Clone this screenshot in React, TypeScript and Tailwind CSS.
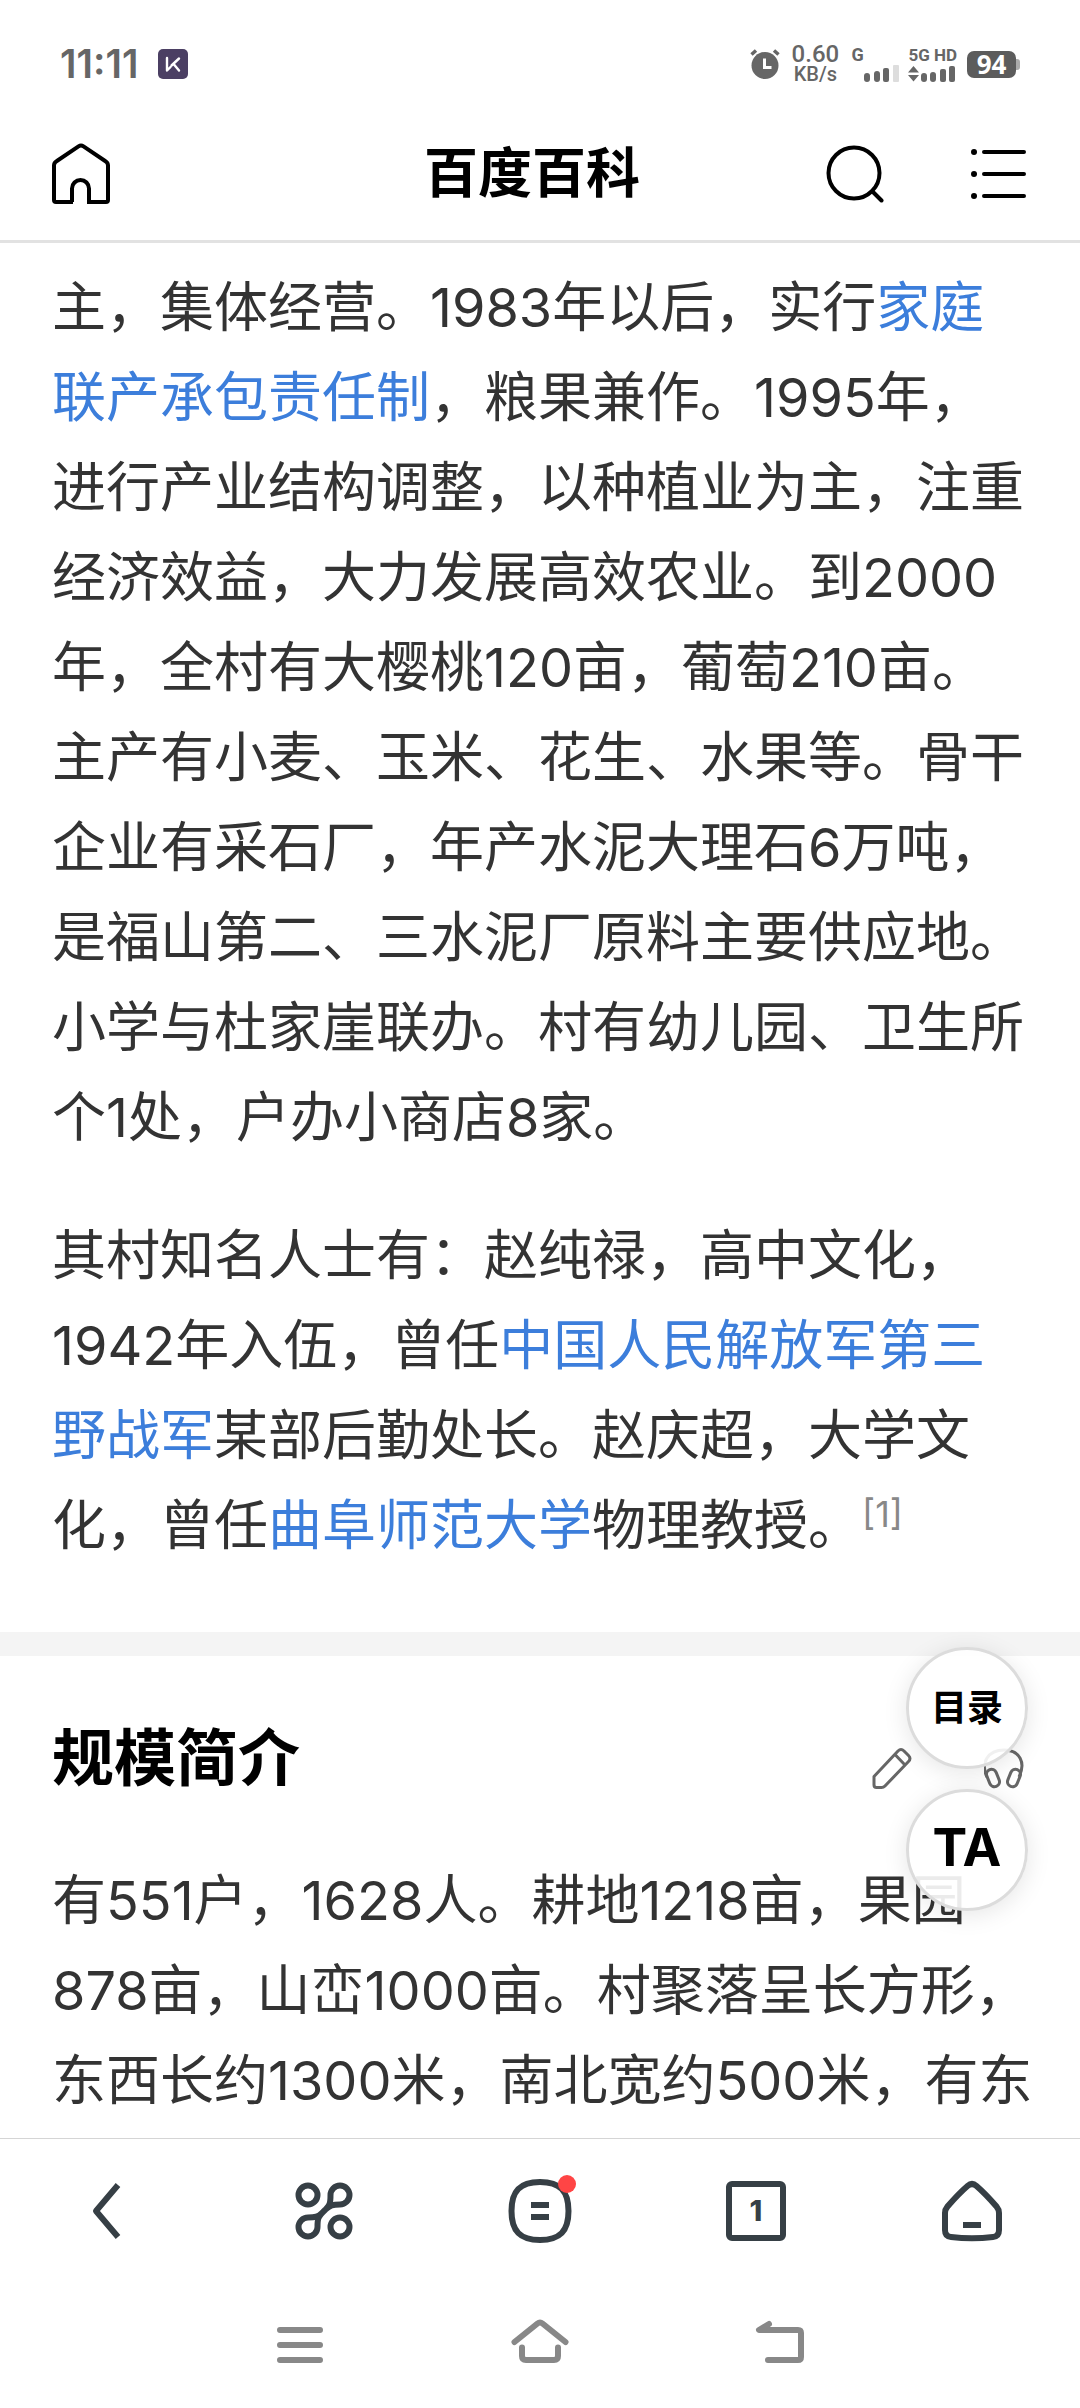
import React from 'react';

interface LineProps {
  children: React.ReactNode;
}

const Line: React.FC<LineProps> = ({ children }) => (
  <span className="block whitespace-nowrap">{children}</span>
);

const Term: React.FC<LineProps> = ({ children }) => (
  <a href="#" className="text-[#3c7edb]">{children}</a>
);

const StatusBar: React.FC = () => (
  <div className="flex h-[84px] items-end justify-between px-[60px] text-[#666]">
    <div className="flex h-[40px] items-center gap-[20px]">
      <span className="font-[Inter,sans-serif] text-[39px] leading-[40px] font-semibold">11:11</span>
      <svg width="30" height="30" viewBox="0 0 30 30" fill="none" aria-hidden="true">
        <rect width="30" height="30" rx="5" fill="#4b3f63" />
        <path d="M9 9v12.500l3.500-3.500M13.500 16.500 21 9.500M16 15.500l5 6" stroke="#fff" strokeWidth="2.400" strokeLinecap="round" strokeLinejoin="round" />
      </svg>
    </div>
    <div className="flex h-[40px] items-center font-[Roboto,sans-serif]">
      <svg width="30" height="30" viewBox="0 0 30 30" aria-hidden="true">
        <circle cx="15" cy="16.500" r="13.500" fill="#666" />
        <path d="M1.500 5.500 6 1.500M24 1.500l4.500 4" stroke="#666" strokeWidth="3.500" />
        <path d="M14.500 9.500v9h7" stroke="#fff" strokeWidth="3" fill="none" />
      </svg>
      <div className="ml-[10px] flex w-[50px] flex-col items-center">
        <span className="text-[24px] leading-[20px] font-medium">0.60</span>
        <span className="text-[20px] leading-[20px] font-medium">KB/s</span>
      </div>
      <div className="ml-[11px] flex h-[36px] flex-col items-start justify-between">
        <span className="text-[18px] leading-[18px] font-bold">G</span>
        <svg className="ml-[13px]" width="36" height="17" viewBox="0 0 36 17" fill="#666" aria-hidden="true">
          <rect x="0" y="8" width="6" height="9" rx="3" />
          <rect x="10" y="6" width="6" height="11" rx="3" />
          <rect x="19" y="3" width="6" height="14" rx="2" />
          <rect x="29" y="0" width="6" height="17" rx="1" fill="#ddd" />
        </svg>
      </div>
      <div className="ml-[8px] flex h-[36px] flex-col items-start justify-between">
        <span className="text-[17px] leading-[18px] font-bold">5G HD</span>
        <svg width="48" height="17" viewBox="0 0 48 17" fill="#666" aria-hidden="true">
          <path d="M5.500 1 11 7.500H0zM5.500 16.500 0 10h11z" />
          <rect x="13" y="8" width="6" height="9" rx="3" />
          <rect x="22" y="7" width="6" height="10" rx="3" />
          <rect x="32" y="4" width="6" height="13" rx="2" />
          <rect x="41" y="1" width="6" height="16" rx="2" />
        </svg>
      </div>
      <div className="ml-[10px] flex items-center">
        <span className="flex h-[27px] w-[49px] items-center justify-center rounded-[7px] bg-[#5c5c5c] font-['Open_Sans',sans-serif] text-[26px] leading-[27px] font-bold text-white">94</span>
        <span className="h-[11px] w-[4px] rounded-r-[3px] bg-[#aaa]" />
      </div>
    </div>
  </div>
);

const Header: React.FC = () => (
  <header className="border-b-[3px] border-[#e2e2e2] bg-white">
    <StatusBar />
    <div className="grid h-[156px] grid-cols-[1fr_auto_1fr] items-center pt-[24px] pr-[54px] pl-[52px]">
      <a href="#" aria-label="首页" className="h-[62px] w-[58px]">
        <svg width="58" height="62" viewBox="0 0 58 62" fill="none" stroke="#000" strokeWidth="4" aria-hidden="true">
          <path d="M21 59H4a2 2 0 0 1-2-2V22.500a5 5 0 0 1 2.500-4.300L26.500 3.300a4.500 4.500 0 0 1 5 0L53.500 18.200A5 5 0 0 1 56 22.500V57a2 2 0 0 1-2 2H37V45.500a8.500 8.500 0 0 0-17 0V59" />
        </svg>
      </a>
      <h1 className="-ml-[14px] text-[54px] leading-[64px] font-bold text-black">百度百科</h1>
      <div className="flex items-center justify-end gap-[86px]">
        <button type="button" aria-label="搜索">
          <svg width="58" height="58" viewBox="0 0 58 58" fill="none" stroke="#000" strokeWidth="4" strokeLinecap="round" aria-hidden="true">
            <circle cx="28" cy="28" r="25.500" />
            <path d="m46.500 46.500 9 9" />
          </svg>
        </button>
        <button type="button" aria-label="菜单">
          <svg width="56" height="52" viewBox="0 0 56 52" fill="none" stroke="#000" strokeWidth="4" strokeLinecap="round" aria-hidden="true">
            <path d="M14 4h40M14 26h40M14 48h40" />
            <path d="M4 4h.01M4 26h.01M4 48h.01" strokeWidth="6" />
          </svg>
        </button>
      </div>
    </div>
  </header>
);

const TabBar: React.FC = () => (
  <nav className="grid h-[144px] grid-cols-5 items-center justify-items-center border-t border-[#d5d5d5] text-[#363f45]">
    <button type="button" aria-label="后退">
      <svg width="64" height="64" viewBox="0 0 64 64" fill="none" stroke="currentColor" strokeWidth="6" strokeLinejoin="round" aria-hidden="true">
        <path d="M42 6 20 32l22 26" />
      </svg>
    </button>
    <button type="button" aria-label="应用">
      <svg width="64" height="64" viewBox="0 0 64 64" fill="none" stroke="currentColor" strokeWidth="6" aria-hidden="true">
        <circle cx="16" cy="16" r="9.500" />
        <circle cx="48" cy="48" r="9.500" />
        <path d="M48 25.500A9.500 9.500 0 1 0 38.500 16c0 8 0 10-7.500 17-5 5-8 5.500-15 5.500A9.500 9.500 0 1 0 25.500 48c0-8 0-10 7.500-17 5-5 8-5.500 15-5.500z" />
      </svg>
    </button>
    <button type="button" aria-label="消息">
      <svg width="76" height="76" viewBox="0 0 76 76" fill="none" stroke="currentColor" strokeWidth="6" aria-hidden="true">
        <path d="M38 9c20 0 28.500 9 28.500 29S58 67 38 67 9.500 58 9.500 38 18 9 38 9z" />
        <path d="M29 32h18M29 44h18" />
        <circle cx="65" cy="11" r="9" fill="#ff4545" stroke="none" />
      </svg>
    </button>
    <button type="button" className="flex h-[60px] w-[60px] items-center justify-center rounded-[6px] border-6 border-[#363f45] font-[Inter,sans-serif] text-[29px] leading-none font-extrabold">1</button>
    <button type="button" aria-label="主页">
      <svg width="64" height="64" viewBox="0 0 64 64" fill="none" stroke="currentColor" strokeWidth="6" strokeLinejoin="round" aria-hidden="true">
        <path d="M27.500 7Q32 3 36.500 7C44 13.500 50 20 56.500 27.500Q59 30.500 59 34V51Q59 57.500 53 58 32 60.500 11 58 5 57.500 5 51V34Q5 30.500 7.500 27.500C14 20 20 13.500 27.500 7z" />
        <path d="M23 46h18" />
      </svg>
    </button>
  </nav>
);

const SystemNav: React.FC = () => (
  <div className="flex h-[126px] items-center justify-center text-[#888]">
    <button type="button" aria-label="最近任务" className="flex w-60 justify-center">
      <svg width="64" height="56" viewBox="0 0 64 56" fill="none" stroke="currentColor" strokeWidth="6" strokeLinecap="round" aria-hidden="true">
        <path d="M12 13h40M12 28h40M12 43h40" />
      </svg>
    </button>
    <button type="button" aria-label="桌面" className="flex w-60 justify-center">
      <svg width="64" height="56" viewBox="0 0 64 56" fill="none" stroke="currentColor" strokeWidth="6" strokeLinecap="round" strokeLinejoin="round" aria-hidden="true">
        <path d="M6.500 25 29.500 6.500q2.500-2 5 0L57.500 25M14 30.500V39q0 4 4 4h28q4 0 4-4v-8.500" />
      </svg>
    </button>
    <button type="button" aria-label="返回" className="flex w-60 justify-center">
      <svg width="64" height="56" viewBox="0 0 64 56" fill="none" stroke="currentColor" strokeWidth="6" strokeLinecap="round" strokeLinejoin="round" aria-hidden="true">
        <path d="M21 7 11 13h39q3 0 3 3v24q0 3-3 3H20" />
      </svg>
    </button>
  </div>
);

export default function App() {
  return (
    <div className="overflow-x-hidden bg-white font-[Inter,'Noto_Sans_CJK_SC',sans-serif]">
      <Header />

      <main className="text-[54px] leading-[90px] text-[#333]">
        <div className="px-[52px] pt-[20px] pb-[61px]">
          <p>
            <Line>主，集体经营。1983年以后，实行<Term>家庭</Term></Line>
            <Line><Term>联产承包责任制</Term>，粮果兼作。1995年，</Line>
            <Line>进行产业结构调整，以种植业为主，注重</Line>
            <Line>经济效益，大力发展高效农业。到2000</Line>
            <Line>年，全村有大樱桃120亩，葡萄210亩。</Line>
            <Line>主产有小麦、玉米、花生、水果等。骨干</Line>
            <Line>企业有采石厂，年产水泥大理石6万吨，</Line>
            <Line>是福山第二、三水泥厂原料主要供应地。</Line>
            <Line>小学与杜家崖联办。村有幼儿园、卫生所</Line>
            <Line>个1处，户办小商店8家。</Line>
          </p>
          <p className="mt-[48px]">
            <Line>其村知名人士有：赵纯禄，高中文化，</Line>
            <Line>1942年入伍，曾任<Term>中国人民解放军第三</Term></Line>
            <Line><Term>野战军</Term>某部后勤处长。赵庆超，大学文</Line>
            <Line>
              化，曾任<Term>曲阜师范大学</Term>物理教授。
              <sup className="text-[36px] leading-none text-[#888]">[1]</sup>
            </Line>
          </p>
        </div>

        <div className="h-[24px] bg-[#f4f4f4]" />

        <section className="relative px-[52px] pb-[12px]">
          <div className="flex h-[200px] items-center justify-between">
            <h2 className="pt-[6px] text-[62px] leading-[80px] font-bold text-black">规模简介</h2>
            <div className="flex gap-[72px] pt-[24px] text-[#666]">
              <button type="button" aria-label="编辑">
                <svg width="40" height="42" viewBox="0 0 40 42" fill="none" stroke="currentColor" strokeWidth="3" strokeLinejoin="round" aria-hidden="true">
                  <path d="M2 29.500 26 4q3-3 6 0l4.500 4.500q3 3 0 6L13 39q-1.500 1.500-3.500 1.500H4.500Q2 40.500 2 38zM23 7.500 33 18" />
                </svg>
              </button>
              <button type="button" aria-label="收听">
                <svg width="44" height="42" viewBox="0 0 44 42" fill="none" stroke="currentColor" strokeWidth="3" aria-hidden="true">
                  <path d="M3 30C-4 16 4 3 20 3S42 16 35 30" />
                  <rect x="4" y="22" width="10" height="18" rx="5" transform="rotate(-22 9 31)" />
                  <rect x="25" y="22" width="10" height="18" rx="5" transform="rotate(22 30 31)" />
                </svg>
              </button>
            </div>
          </div>
          <p>
            <Line>有551户，1628人。耕地1218亩，果园</Line>
            <Line>878亩，山峦1000亩。村聚落呈长方形，</Line>
            <Line>东西长约1300米，南北宽约500米，有东</Line>
          </p>

          <div className="absolute -top-[9px] right-[52px] flex flex-col gap-[20px] text-black">
            <button type="button" className="h-[122px] w-[122px] rounded-full border-[3px] border-[#dcdcdc] bg-white/90 text-[36px] leading-none font-bold shadow-[0_4px_24px_rgba(0,0,0,0.1)]">目录</button>
            <button type="button" className="h-[122px] w-[122px] rounded-full border-[3px] border-[#dcdcdc] bg-white/90 pb-[4px] text-[52px] leading-none font-bold shadow-[0_4px_24px_rgba(0,0,0,0.1)]">TA</button>
          </div>
        </section>
      </main>

      <TabBar />
      <SystemNav />
    </div>
  );
}
